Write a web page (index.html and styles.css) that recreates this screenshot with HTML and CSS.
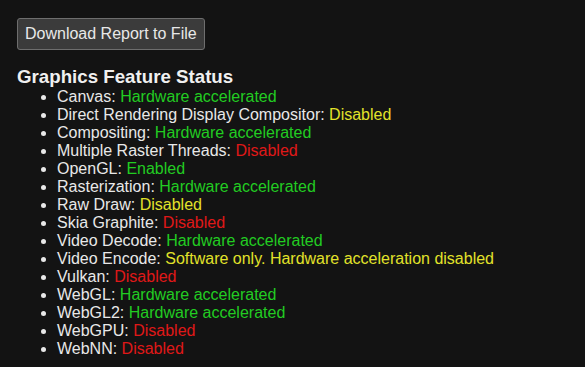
FILE: index.html
```html
<!DOCTYPE html>
<html lang="en">
<head>
    <meta charset="UTF-8">
    <title>GPU</title>
    <link rel="stylesheet" href="styles.css">
</head>
<body>
<div class="toolbar">
    <button class="download">Download Report to File</button>
</div>
<h3>Graphics Feature Status</h3>
<ul class="features">
    <li>Canvas: <span class="green">Hardware accelerated</span></li>
    <li>Direct Rendering Display Compositor: <span class="yellow">Disabled</span></li>
    <li>Compositing: <span class="green">Hardware accelerated</span></li>
    <li>Multiple Raster Threads: <span class="red">Disabled</span></li>
    <li>OpenGL: <span class="green">Enabled</span></li>
    <li>Rasterization: <span class="green">Hardware accelerated</span></li>
    <li>Raw Draw: <span class="yellow">Disabled</span></li>
    <li>Skia Graphite: <span class="red">Disabled</span></li>
    <li>Video Decode: <span class="green">Hardware accelerated</span></li>
    <li>Video Encode: <span class="yellow">Software only. Hardware acceleration disabled</span></li>
    <li>Vulkan: <span class="red">Disabled</span></li>
    <li>WebGL: <span class="green">Hardware accelerated</span></li>
    <li>WebGL2: <span class="green">Hardware accelerated</span></li>
    <li>WebGPU: <span class="red">Disabled</span></li>
    <li>WebNN: <span class="red">Disabled</span></li>
</ul>
</body>
</html>
```

FILE: styles.css
```css
*{
    margin: 0;
    padding: 0;
}
html,body{
    width: 100%;
    height: 100%;
}
body{
    background: #131313;
    color: #e8e8e8;
    font-family: "Liberation Sans", Arial, sans-serif;
    font-size: 16px;
    padding: 18px 17px;
    box-sizing: border-box;
}
.toolbar{
    display: flex;
}
.download{
    font-family: "Liberation Sans", Arial, sans-serif;
    font-size: 16px;
    line-height: 18px;
    white-space: nowrap;
    color: #e8e8e8;
    background: #3b3b3b;
    border: 1px solid #6e6e6e;
    border-radius: 3px;
    padding: 6px 7px;
}
h3{
    font-size: 18.72px;
    font-weight: bold;
    line-height: 21.5px;
    margin-top: 16px;
    color: #f0f0f0;
}
.features{
    padding-left: 40px;
    line-height: 18px;
}
.features>li{
    list-style: disc;
}
.green{
    color: #22cc22;
}
.yellow{
    color: #e2e22a;
}
.red{
    color: #e01818;
}
```
